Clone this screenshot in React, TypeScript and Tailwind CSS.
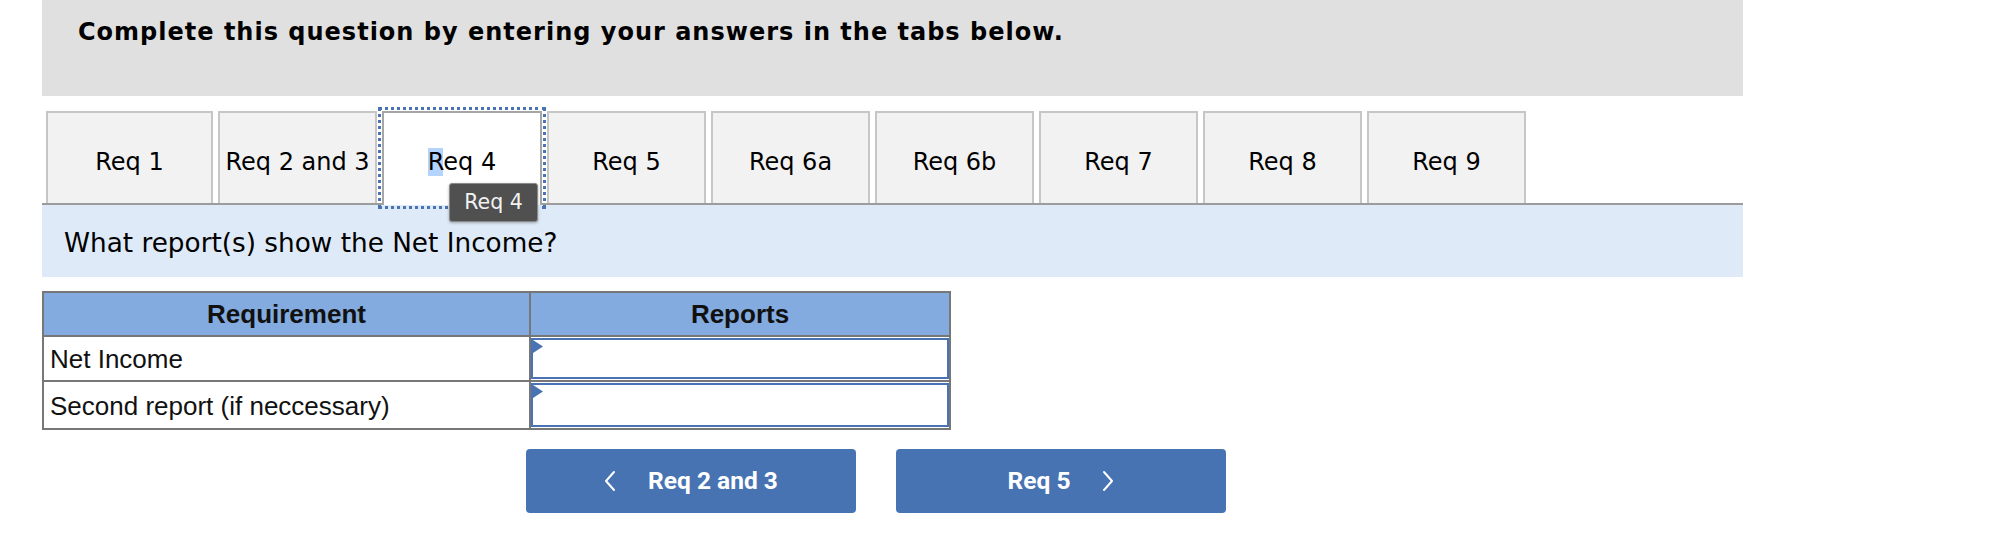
import { useState } from "react";

const tabs = ["Req 1", "Req 2 and 3", "Req 4", "Req 5", "Req 6a", "Req 6b", "Req 7", "Req 8", "Req 9"];

function Chevron({ dir }: { dir: "left" | "right" }) {
  return (
    <svg width="12" height="22" viewBox="0 0 12 22" fill="none" stroke="white" strokeWidth="2" strokeLinecap="round" strokeLinejoin="round">
      {dir === "left" ? <polyline points="10,2 2,11 10,20" /> : <polyline points="2,2 10,11 2,20" />}
    </svg>
  );
}

function AnswerBox() {
  return (
    <div className="relative h-full w-full border-2 border-[#4a73b3] bg-white">
      <svg className="absolute left-0 top-0" width="11" height="13" viewBox="0 0 11 13">
        <polygon points="0,0 10,6.5 0,13" fill="#4a73b3" />
      </svg>
    </div>
  );
}

export default function App() {
  const [active, setActive] = useState(2);
  const rows = ["Net Income", "Second report (if neccessary)"];

  return (
    <div className="w-[1994px] h-[550px] bg-white pl-[42px]">
      <div className="w-[1701px]">
        <div className="h-[96px] bg-[#e0e0e0] pl-[36px] pt-[18px]">
          <h2 className="font-['DejaVu_Sans',sans-serif] font-bold text-[24px] leading-[28px] tracking-[1px] text-black">
            Complete this question by entering your answers in the tabs below.
          </h2>
        </div>

        <div className="mt-[15px] flex items-end gap-[5px] pl-[4px] border-b-2 border-[#9c9c9c] h-[94px]">
          {tabs.map((t, i) => {
            const on = i === active;
            const w = i === 0 ? "w-[167px]" : on ? "w-[160px]" : "w-[159px]";
            return (
              <button
                key={t}
                onClick={() => setActive(i)}
                className={`${w} relative flex shrink-0 items-center justify-center pt-[7px] whitespace-nowrap font-['DejaVu_Sans',sans-serif] text-[24px] text-black ${
                  on
                    ? "h-[94px] -mb-[2px] pb-[2px] bg-white border-2 border-b-0 border-[#a6a6a6] outline-[3px] outline-dotted outline-[#4a73b3] outline-offset-[1px] z-10"
                    : "h-[92px] bg-[#f2f2f2] border-2 border-b-0 border-[#c6c6c6]"
                }`}
              >
                {on ? (
                  <>
                    <span>
                      <span className="bg-[#b4d4fd]">R</span>eq 4
                    </span>
                    <span className="absolute left-[65px] top-[70px] h-[39px] w-[89px] flex items-center justify-center rounded-[3px] border border-[#8a8a8a] bg-[#505050] text-[20.5px] text-[#f2f2f2] shadow-[0_1px_3px_rgba(0,0,0,0.3)]">
                      Req 4
                    </span>
                  </>
                ) : (
                  t
                )}
              </button>
            );
          })}
        </div>

        <div className="h-[72px] bg-[#deeaf7] flex items-center pl-[22px] pt-[5px]">
          <p className="font-['DejaVu_Sans',sans-serif] text-[26.3px] text-black">What report(s) show the Net Income?</p>
        </div>

        <div className="mt-[14px] w-[909px] border-2 border-[#777] font-['Liberation_Sans',Arial,sans-serif] text-[26px] text-[#111]">
          <div className="flex h-[44px] bg-[#83abdf] border-b-2 border-[#777] font-bold">
            <div className="w-[487px] border-r-2 border-[#777] flex items-center justify-center">Requirement</div>
            <div className="flex-1 flex items-center justify-center">Reports</div>
          </div>
          {rows.map((r, i) => (
            <div key={r} className={`flex ${i === 0 ? "h-[45px] border-b-2 border-[#777]" : "h-[46px]"}`}>
              <div className="w-[487px] border-r-2 border-[#777] flex items-center pl-[6px] pt-[2px]">{r}</div>
              <div className="flex-1 py-[1px]">
                <AnswerBox />
              </div>
            </div>
          ))}
        </div>

        <div className="mt-[19px] ml-[484px] flex gap-[40px] font-['Roboto',sans-serif] font-bold text-[24.5px] text-white">
          <button className="w-[330px] h-[64px] rounded-[4px] bg-[#4873b3] flex items-center justify-center gap-[32px]">
            <Chevron dir="left" />
            <span>Req 2 and 3</span>
          </button>
          <button className="w-[330px] h-[64px] rounded-[4px] bg-[#4873b3] flex items-center justify-center gap-[32px]">
            <span>Req 5</span>
            <Chevron dir="right" />
          </button>
        </div>
      </div>
    </div>
  );
}
